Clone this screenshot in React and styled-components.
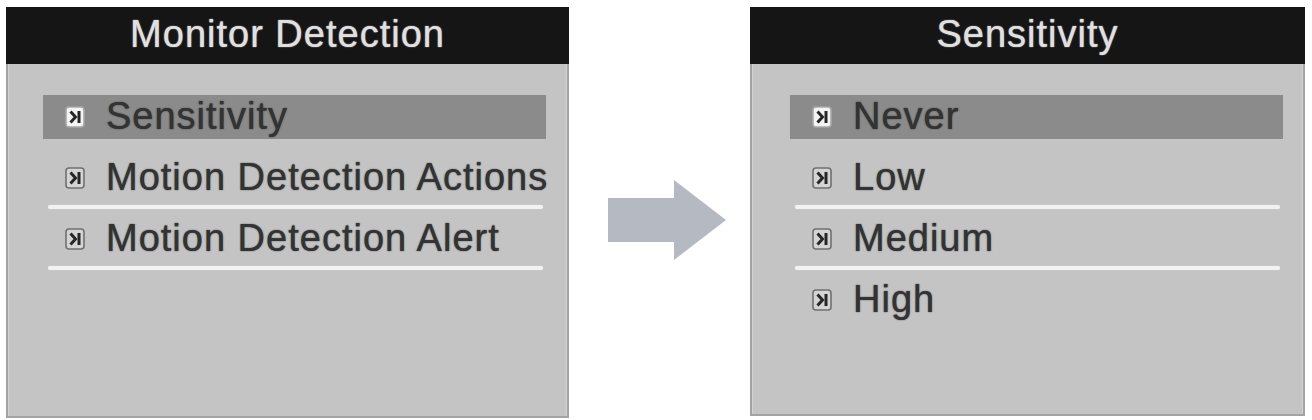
import React from "react";
import styled, { createGlobalStyle } from "styled-components";

const Global = createGlobalStyle`
  html, body { margin: 0; padding: 0; background: #ffffff; }
  body { font-family: "Liberation Sans", Arial, sans-serif; }
`;

const Stage = styled.div`
  display: flex;
  align-items: flex-start;
  padding: 7px 0 0 6px;
  width: 1312px;
  height: 420px;
  box-sizing: border-box;
`;

const Panel = styled.section`
  display: flex;
  flex-direction: column;
  width: ${(p) => p.$w}px;
  height: ${(p) => p.$h}px;
  box-sizing: border-box;
  border: 2px solid #a3a3a3;
  border-top: none;
  background: #c4c4c4;
  box-shadow: inset 1px 0 0 #d2d2d2, inset -1px 0 0 #d2d2d2;
`;

const Header = styled.header`
  height: 57px;
  margin: 0 -2px;
  background: #151515;
  color: #e0e0e0;
  display: flex;
  align-items: center;
  justify-content: center;
  font-size: 38px;
  letter-spacing: 1px;
  text-shadow: 0 0 1px rgba(255, 255, 255, 0.7), 0 0 2px rgba(255, 255, 255, 0.25);
  padding-bottom: 3px;
  box-sizing: border-box;
`;

const List = styled.div`
  display: flex;
  flex-direction: column;
  padding: 31px ${(p) => p.$right}px 0 ${(p) => p.$left}px;
`;

const Row = styled.div`
  height: 44px;
  display: flex;
  align-items: center;
  gap: 21px;
  padding-left: 22px;
  background: ${(p) => (p.$active ? "#8b8b8b" : "transparent")};
  color: #333333;
  font-size: 38px;
  letter-spacing: 1px;
  white-space: nowrap;
  text-shadow: 0 0 1px rgba(30, 30, 30, 0.8), 0 0 2px rgba(30, 30, 30, 0.25);
`;

const Label = styled.span`
  line-height: 44px;
  padding-bottom: 2px;
`;

const Rule = styled.div`
  height: 4px;
  margin: 5px 3px 8px 5px;
  border-radius: 2px;
  background: ${(p) => (p.$show ? "#f2f2f2" : "transparent")};
  box-shadow: ${(p) => (p.$show ? "0 0 1px #e6e6e6" : "none")};
`;

const ArrowArea = styled.div`
  width: 181px;
  height: 411px;
  display: flex;
  align-items: flex-start;
  padding: 171px 0 0 38px;
  box-sizing: border-box;
`;

function Bullet({ active }) {
  return (
    <svg width="20" height="22" viewBox="0 0 20 22" style={{ flex: "none" }}>
      <rect
        x="1"
        y="1"
        width="18"
        height="20"
        rx="3"
        fill={active ? "#f4f4f4" : "#d4d4d4"}
        stroke={active ? "#a8a8a8" : "#707070"}
        strokeWidth="1.6"
      />
      <path
        d="M5.5 5.5 L10.5 11 L5.5 16.5"
        fill="none"
        stroke="#262626"
        strokeWidth="3"
        strokeLinejoin="miter"
      />
      <path d="M14 5 V17" stroke="#262626" strokeWidth="3" />
    </svg>
  );
}

function Arrow() {
  return (
    <svg width="120" height="84" viewBox="0 0 120 84">
      <polygon
        points="1,20 67,20 67,2 119,42 67,82 67,64 1,64"
        fill="#b5b9c2"
      />
    </svg>
  );
}

function Menu({ title, items, w, h, left, right }) {
  return (
    <Panel $w={w} $h={h}>
      <Header>{title}</Header>
      <List $left={left} $right={right}>
        {items.map((it) => (
          <React.Fragment key={it.label}>
            <Row $active={it.active}>
              <Bullet active={it.active} />
              <Label>{it.label}</Label>
            </Row>
            <Rule $show={it.rule} />
          </React.Fragment>
        ))}
      </List>
    </Panel>
  );
}

export default function App() {
  const leftItems = [
    { label: "Sensitivity", active: true, rule: false },
    { label: "Motion Detection Actions", rule: true },
    { label: "Motion Detection Alert", rule: true },
  ];
  const rightItems = [
    { label: "Never", active: true, rule: false },
    { label: "Low", rule: true },
    { label: "Medium", rule: true },
    { label: "High", rule: false },
  ];
  return (
    <>
      <Global />
      <Stage>
        <Menu
          title="Monitor Detection"
          items={leftItems}
          w={563}
          h={411}
          left={35}
          right={21}
        />
        <ArrowArea>
          <Arrow />
        </ArrowArea>
        <Menu
          title="Sensitivity"
          items={rightItems}
          w={555}
          h={409}
          left={38}
          right={20}
        />
      </Stage>
    </>
  );
}
